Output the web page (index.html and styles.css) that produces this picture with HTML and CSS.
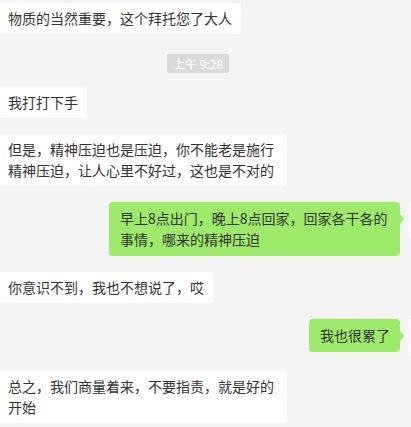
FILE: index.html
```html
<!DOCTYPE html>
<html lang="zh-CN">
<head>
    <meta charset="UTF-8">
    <meta name="viewport" content="width=device-width, initial-scale=1.0">
    <title>聊天记录</title>
    <link rel="stylesheet" href="styles.css">
</head>
<body>
    <div class="chat">
        <div class="row left">
            <div class="bubble">物质的当然重要，这个拜托您了大人</div>
        </div>
        <div class="time"><span>上午 9:28</span></div>
        <div class="row left">
            <div class="bubble">我打打下手</div>
        </div>
        <div class="row left">
            <div class="bubble">但是，精神压迫也是压迫，你不能老是施行精神压迫，让人心里不好过，这也是不对的</div>
        </div>
        <div class="row right">
            <div class="bubble">早上8点出门，晚上8点回家，回家各干各的事情，哪来的精神压迫</div>
            <div class="avatar"></div>
        </div>
        <div class="row left">
            <div class="bubble">你意识不到，我也不想说了，哎</div>
        </div>
        <div class="row right">
            <div class="bubble">我也很累了</div>
            <div class="avatar"></div>
        </div>
        <div class="row left">
            <div class="bubble">总之，我们商量着来，不要指责，就是好的开始</div>
        </div>
    </div>
</body>
</html>
```

FILE: styles.css
```css
body {
    margin: 0;
    background: #f4f4f4;
    font-family: "Microsoft YaHei", "Noto Sans CJK SC", sans-serif;
    color: #333;
    overflow: hidden;
}
.chat {
    display: flex;
    flex-direction: column;
    gap: 16px;
    padding-top: 3px;
}
.row {
    display: flex;
    align-items: flex-start;
}
.row.right {
    justify-content: flex-end;
}
.bubble {
    position: relative;
    max-width: 270px;
    font-size: 14px;
    line-height: 21px;
    padding: 5px 9px 5px 8px;
    background: #fff;
    border-radius: 3px;
    border-top-left-radius: 0;
    border-bottom-left-radius: 0;
}
.right .bubble {
    background: #9eea6a;
    padding: 6px 10px 6px 11px;
    border-radius: 4px;
    margin-right: 9px;
}
.right .bubble::after {
    content: "";
    position: absolute;
    right: -4px;
    top: 12px;
    border-left: 4px solid #9eea6a;
    border-top: 5px solid transparent;
    border-bottom: 5px solid transparent;
}
/* only the left edge of the avatar is inside the window */
.avatar {
    width: 2px;
    height: 36px;
    background: #fff;
    border-radius: 2px 0 0 2px;
}
.time {
    display: flex;
    justify-content: center;
    margin: 4px 0 -2px;
    padding-right: 15px;
}
.time span {
    background: #dadada;
    color: #fff;
    font-size: 12px;
    line-height: 19px;
    padding: 0 6px;
    border-radius: 2px;
}
```
